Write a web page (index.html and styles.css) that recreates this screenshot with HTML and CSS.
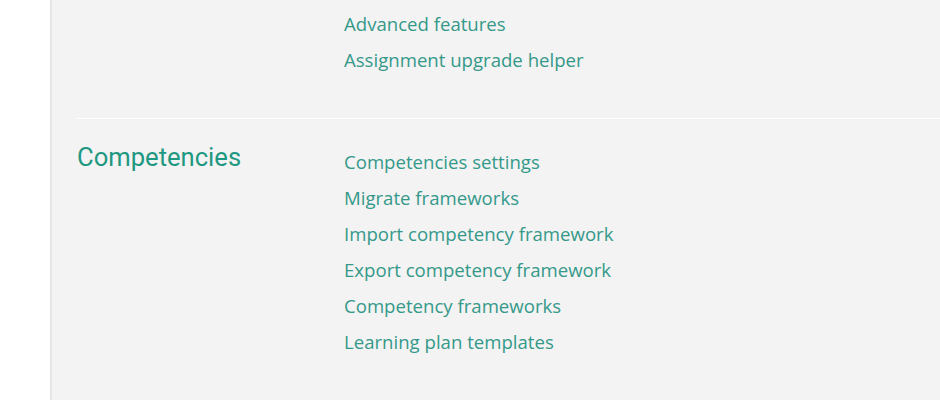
FILE: index.html
```html
<!DOCTYPE html>
<html lang="en">
<head>
<meta charset="utf-8">
<title>Site administration</title>
<link rel="stylesheet" href="styles.css">
</head>
<body>
<div class="page">
  <aside class="sidebar"></aside>
  <main class="main">
    <section class="section section-first">
      <div class="section-title"></div>
      <ul class="links">
        <li><a href="#">Advanced features</a></li>
        <li><a href="#">Assignment upgrade helper</a></li>
      </ul>
    </section>
    <section class="section">
      <h2 class="section-title">Competencies</h2>
      <ul class="links">
        <li><a href="#">Competencies settings</a></li>
        <li><a href="#">Migrate frameworks</a></li>
        <li><a href="#">Import competency framework</a></li>
        <li><a href="#">Export competency framework</a></li>
        <li><a href="#">Competency frameworks</a></li>
        <li><a href="#">Learning plan templates</a></li>
      </ul>
    </section>
  </main>
</div>
</body>
</html>
```
FILE: styles.css
```css
html, body {
  margin: 0;
  padding: 0;
  background: #ffffff;
}

.page {
  display: flex;
  min-height: 400px;
}

.sidebar {
  width: 50px;
  flex: none;
  background: #ffffff;
}

.main {
  flex: 1;
  background: #f3f3f3;
  border-left: 2px solid #e6e6e6;
  padding-left: 25px;
}

.section {
  display: grid;
  grid-template-columns: 267px 1fr;
  border-top: 1px solid #ffffff;
  padding: 25px 0 36px;
}

.section-first {
  border-top: none;
  padding: 6px 0 40px;
}

.section-title {
  margin: 0;
  font-family: Roboto, "Noto Sans", sans-serif;
  font-weight: 400;
  font-size: 25.6px;
  line-height: 26px;
  color: #1f9882;
}

.links {
  list-style: none;
  margin: 0;
  padding: 0;
}

.links li {
  font-family: "Open Sans", "Noto Sans", sans-serif;
  font-size: 18.6px;
  line-height: 36px;
}

.links a {
  color: #35998a;
  text-decoration: none;
}
```
